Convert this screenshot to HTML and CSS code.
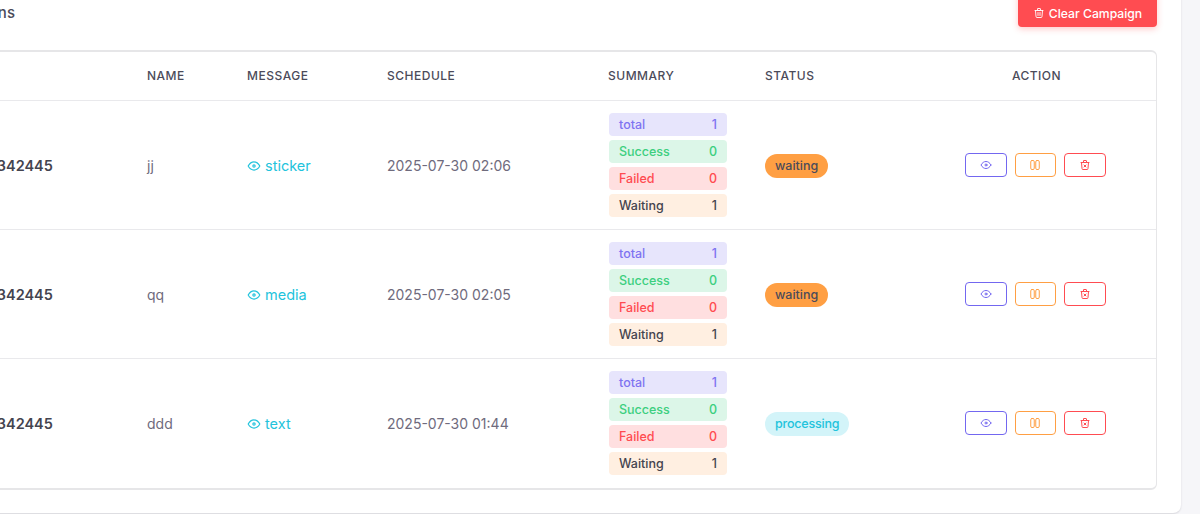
FILE: index.html
```html
<!DOCTYPE html>
<html lang="en">
<head>
<meta charset="utf-8">
<title>Campaigns</title>
<link rel="stylesheet" href="styles.css">
</head>
<body>
<svg class="sprite" width="0" height="0" aria-hidden="true">
  <symbol id="eye" viewBox="0 0 24 24"><circle cx="12" cy="12" r="2"/><path d="M22 12c-2.7 4.7-6 7-10 7s-7.300-2.300-10-7c2.700-4.700 6-7 10-7s7.300 2.300 10 7"/></symbol>
  <symbol id="pause" viewBox="0 0 24 24"><rect x="3.500" y="3" width="7" height="18" rx="2.500"/><rect x="13.500" y="3" width="7" height="18" rx="2.500"/></symbol>
  <symbol id="trash" viewBox="0 0 24 24"><path d="M4 7h16M10 3h4a1 1 0 0 1 1 1v3H9V4a1 1 0 0 1 1-1M5 7l1 12a2 2 0 0 0 2 2h8a2 2 0 0 0 2-2l1-12"/><path d="M10 12l4 4m0-4l-4 4"/></symbol>
  <symbol id="trash-plain" viewBox="0 0 24 24"><path d="M4 7h16M10 3h4a1 1 0 0 1 1 1v3H9V4a1 1 0 0 1 1-1M5 7l1 12a2 2 0 0 0 2 2h8a2 2 0 0 0 2-2l1-12M10 11v6M14 11v6"/></symbol>
</svg>
<main class="card">
  <header class="card-head">
    <h2 class="title">Campaigns</h2>
    <button class="clear-btn" type="button"><svg class="ico"><use href="#trash-plain"/></svg>Clear Campaign</button>
  </header>
  <div class="table-wrap">
    <table class="table">
      <colgroup>
        <col class="c-num"><col class="c-name"><col class="c-msg"><col class="c-sched"><col class="c-sum"><col class="c-status"><col class="c-action">
      </colgroup>
      <thead>
        <tr><th>No</th><th>Name</th><th>Message</th><th>Schedule</th><th>Summary</th><th>Status</th><th class="center">Action</th></tr>
      </thead>
      <tbody>
        <tr>
          <td class="num">62812342445</td>
          <td>jj</td>
          <td><span class="msg"><svg class="ico"><use href="#eye"/></svg>sticker</span></td>
          <td>2025-07-30 02:06</td>
          <td class="flush">
            <div class="summary">
              <div class="pill p-total"><span>total</span><span>1</span></div>
              <div class="pill p-success"><span>Success</span><span>0</span></div>
              <div class="pill p-failed"><span>Failed</span><span>0</span></div>
              <div class="pill p-waiting"><span>Waiting</span><span>1</span></div>
            </div>
          </td>
          <td><span class="badge b-waiting">waiting</span></td>
          <td class="flush">
            <div class="actions">
              <button class="act a-view" type="button"><svg class="ico"><use href="#eye"/></svg></button>
              <button class="act a-pause" type="button"><svg class="ico"><use href="#pause"/></svg></button>
              <button class="act a-del" type="button"><svg class="ico"><use href="#trash"/></svg></button>
            </div>
          </td>
        </tr>
        <tr>
          <td class="num">62812342445</td>
          <td>qq</td>
          <td><span class="msg"><svg class="ico"><use href="#eye"/></svg>media</span></td>
          <td>2025-07-30 02:05</td>
          <td class="flush">
            <div class="summary">
              <div class="pill p-total"><span>total</span><span>1</span></div>
              <div class="pill p-success"><span>Success</span><span>0</span></div>
              <div class="pill p-failed"><span>Failed</span><span>0</span></div>
              <div class="pill p-waiting"><span>Waiting</span><span>1</span></div>
            </div>
          </td>
          <td><span class="badge b-waiting">waiting</span></td>
          <td class="flush">
            <div class="actions">
              <button class="act a-view" type="button"><svg class="ico"><use href="#eye"/></svg></button>
              <button class="act a-pause" type="button"><svg class="ico"><use href="#pause"/></svg></button>
              <button class="act a-del" type="button"><svg class="ico"><use href="#trash"/></svg></button>
            </div>
          </td>
        </tr>
        <tr>
          <td class="num">62812342445</td>
          <td>ddd</td>
          <td><span class="msg"><svg class="ico"><use href="#eye"/></svg>text</span></td>
          <td>2025-07-30 01:44</td>
          <td class="flush">
            <div class="summary">
              <div class="pill p-total"><span>total</span><span>1</span></div>
              <div class="pill p-success"><span>Success</span><span>0</span></div>
              <div class="pill p-failed"><span>Failed</span><span>0</span></div>
              <div class="pill p-waiting"><span>Waiting</span><span>1</span></div>
            </div>
          </td>
          <td><span class="badge b-processing">processing</span></td>
          <td class="flush">
            <div class="actions">
              <button class="act a-view" type="button"><svg class="ico"><use href="#eye"/></svg></button>
              <button class="act a-pause" type="button"><svg class="ico"><use href="#pause"/></svg></button>
              <button class="act a-del" type="button"><svg class="ico"><use href="#trash"/></svg></button>
            </div>
          </td>
        </tr>
      </tbody>
    </table>
  </div>
</main>
</body>
</html>
```
FILE: styles.css
```css
* { box-sizing: border-box; }
html, body { height: 100%; }
body {
  margin: 0;
  overflow: hidden;
  background: #f6f6f9;
  font-family: Inter, "Liberation Sans", sans-serif;
  color: #6f6b7d;
}
.sprite { display: block; }
.ico {
  fill: none;
  stroke: currentColor;
  stroke-width: 2;
  stroke-linecap: round;
  stroke-linejoin: round;
  display: block;
  flex: none;
}
.card {
  width: 1271px;
  height: 553px;
  margin: -40px 0 0 -90px;
  padding: 29px 24px 23px;
  background: #fff;
  border-radius: 8px;
  box-shadow: 0 1px 2px rgba(47, 43, 61, 0.16);
}
.card-head {
  display: flex;
  justify-content: space-between;
  align-items: flex-start;
  height: 61px;
}
.title {
  margin: 12px 0 0;
  font-size: 15px;
  font-weight: 500;
  line-height: 24px;
  color: #4b4b5a;
}
.clear-btn {
  display: flex;
  align-items: center;
  justify-content: center;
  gap: 4px;
  width: 139px;
  height: 38px;
  border: 0;
  border-radius: 4px;
  background: #ff4c51;
  color: #fff;
  font: 500 12.200px Inter, "Liberation Sans", sans-serif;
  padding: 10px 0 0;
  box-shadow: 0 2px 6px rgba(255, 76, 81, 0.3);
}
.clear-btn .ico { width: 12px; height: 12px; stroke-width: 1.800; }
.table-wrap {
  height: 440px;
  border: 1px solid #e6e6e8;
  border-width: 2px 1px;
  border-radius: 6px;
  overflow: hidden;
}
.table {
  width: 100%;
  border-collapse: collapse;
  table-layout: fixed;
}
.c-num { width: 196px; }
.c-name { width: 100px; }
.c-msg { width: 140px; }
.c-sched { width: 221px; }
.c-sum { width: 157px; }
.c-status { width: 168px; }
th {
  height: 48px;
  padding: 0 16px;
  text-align: left;
  font-size: 12px;
  font-weight: 500;
  letter-spacing: 0.500px;
  text-transform: uppercase;
  color: #4b4b5a;
}
th.center { text-align: center; }
tbody tr { height: 129px; border-top: 1px solid #e9e9ec; }
td {
  padding: 2px 16px 0;
  font-size: 14px;
  color: #6f6b7d;
  vertical-align: middle;
}
td.flush { padding-top: 0; }
td.num {
  padding-left: 19px;
  font-size: 14.500px;
  font-weight: 600;
  color: #44444f;
}
.msg {
  color: #22c3dc;
  font-size: 14.500px;
}
.msg .ico {
  display: inline-block;
  width: 14px;
  height: 14px;
  margin-right: 4px;
  vertical-align: -2px;
}
.summary {
  display: flex;
  flex-direction: column;
  gap: 4px;
  width: 118px;
  margin-left: 1px;
}
.pill {
  display: flex;
  justify-content: space-between;
  align-items: center;
  height: 23px;
  padding: 0 10px;
  border-radius: 4px;
  font-size: 12.500px;
  font-weight: 500;
}
.p-total { background: #e7e5fc; color: #7f74f1; }
.p-success { background: #dcf6e8; color: #3ccf7f; }
.p-failed { background: #ffdfe0; color: #ff4c51; }
.p-waiting { background: #ffefe1; color: #44444f; }
.badge {
  display: inline-block;
  height: 24px;
  padding: 0 10px;
  border-radius: 12px;
  font-size: 12.500px;
  font-weight: 500;
  line-height: 24px;
}
.b-waiting { background: #ff9f43; color: #4b4b5a; }
.b-processing { background: #d3f4f9; color: #22c3dc; letter-spacing: -0.200px; }
.actions { display: flex; gap: 8px; padding-left: 32px; }
.act {
  display: flex;
  align-items: center;
  justify-content: center;
  width: 41.500px;
  height: 24px;
  padding: 0;
  background: #fff;
  border: 1px solid currentColor;
  border-radius: 4px;
}
.act .ico { width: 12px; height: 12px; stroke-width: 2; }
.a-view { color: #7367f0; }
.a-pause { color: #ff9f43; }
.a-del { color: #ff4c51; }
```
